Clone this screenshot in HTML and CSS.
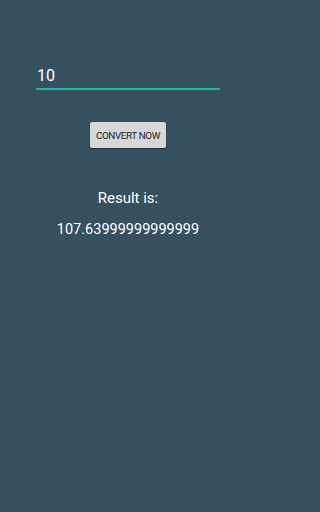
FILE: index.html
```html
<!DOCTYPE html>
<html>
<head>
<meta charset="utf-8">
<link rel="stylesheet" href="styles.css">
</head>
<body>
<div class="screen">
  <div class="field"><span class="value">10</span></div>
  <button class="btn">CONVERT NOW</button>
  <div class="label">Result is:</div>
  <div class="result">107.63999999999999</div>
</div>
</body>
</html>
```
FILE: styles.css
```css
html, body {
  margin: 0;
  padding: 0;
  background: #35505f;
}
.screen {
  width: 256px;
  height: 512px;
  background: #35505f;
  font-family: Roboto, "Noto Sans", sans-serif;
  color: #ffffff;
  display: flex;
  flex-direction: column;
  align-items: center;
}
.field {
  margin-top: 66px;
  width: 184px;
  height: 22px;
  border-bottom: 2px solid #1fb5a8;
  box-sizing: content-box;
  font-size: 16px;
  line-height: 20px;
}
.value {
  display: block;
  padding-left: 1px;
}
.btn {
  margin-top: 32px;
  width: 76px;
  height: 26px;
  background: #d6d7d7;
  border: none;
  border-radius: 2px;
  box-shadow: 0 1px 2px rgba(0,0,0,0.4);
  font-family: Roboto, "Noto Sans", sans-serif;
  font-weight: 400;
  font-size: 9.8px;
  letter-spacing: -0.35px;
  color: #1e1e1e;
  padding: 0;
}
.label {
  margin-top: 40px;
  font-size: 15px;
  line-height: 20px;
}
.result {
  margin-top: 12px;
  font-size: 14.5px;
  line-height: 20px;
}
```
